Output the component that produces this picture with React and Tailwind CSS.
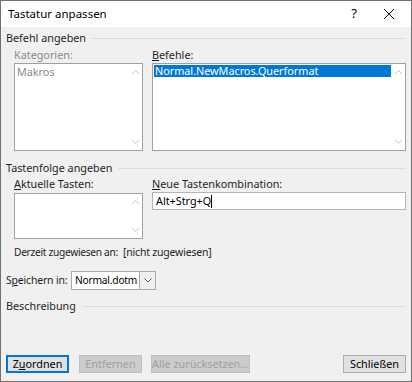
import React from "react";

const font = { fontFamily: '"Segoe UI", "Noto Sans", sans-serif' };

function ScrollArrows() {
  return (
    <div className="flex flex-col justify-between items-center w-[14px] py-[5px] text-[#c2c2c2]">
      <svg width="9" height="6" viewBox="0 0 9 6">
        <path d="M1 5 L4.5 1.5 L8 5" fill="none" stroke="currentColor" strokeWidth="1" />
      </svg>
      <svg width="9" height="6" viewBox="0 0 9 6">
        <path d="M1 1 L4.5 4.5 L8 1" fill="none" stroke="currentColor" strokeWidth="1" />
      </svg>
    </div>
  );
}

function GroupHeader({ children }) {
  return (
    <div className="flex items-center gap-[6px] h-[16px]">
      <span className="text-[#1e1e1e] whitespace-nowrap">{children}</span>
      <div className="flex-1 border-t border-[#dcdcdc] mt-[1px]" />
    </div>
  );
}

export default function App() {
  return (
    <div
      className="w-[412px] h-[382px] border border-[#707070] bg-[#f0f0f0] flex flex-col text-[10.8px] text-[#1e1e1e] overflow-hidden whitespace-nowrap"
      style={font}
    >
      {/* Title bar */}
      <div className="h-[26px] bg-white flex items-center pl-[7px] shrink-0">
        <span className="text-[11.5px] text-black">Tastatur anpassen</span>
        <span className="ml-auto mr-[26px] text-[13px] text-black">?</span>
        <svg width="12" height="12" viewBox="0 0 12 12" className="mr-[16px]">
          <path d="M1 1 L11 11 M11 1 L1 11" stroke="#111" strokeWidth="1" />
        </svg>
      </div>

      {/* Body */}
      <div className="flex-1 flex flex-col pl-[5px] pr-[5px] pt-[3px]">
        <GroupHeader>Befehl angeben</GroupHeader>

        <div className="flex gap-[9px] pl-[8px] mt-[2px]">
          <div className="w-[129px] flex flex-col">
            <span className="text-[#8a8a8a] leading-[14px]">Kategorien:</span>
            <div className="mt-[1px] h-[88px] border border-[#a0a0a0] bg-white flex">
              <div className="flex-1 pl-[2px] pt-[1px] text-[#8a8a8a] leading-[14px]">Makros</div>
              <ScrollArrows />
            </div>
          </div>
          <div className="flex-1 flex flex-col">
            <span className="leading-[14px]">
              <u>B</u>efehle:
            </span>
            <div className="mt-[1px] h-[88px] border border-[#a0a0a0] bg-white flex">
              <div className="flex-1 pl-[1px] pt-[1px]">
                <div className="bg-[#0078d7] text-white leading-[12px] h-[12px] pl-[1px]">
                  Normal.NewMacros.Querformat
                </div>
              </div>
              <ScrollArrows />
            </div>
          </div>
        </div>

        <div className="mt-[9px]">
          <GroupHeader>Tastenfolge angeben</GroupHeader>
        </div>

        <div className="flex gap-[9px] pl-[8px] mt-[1px]">
          <div className="w-[129px] flex flex-col">
            <span className="leading-[14px]">
              <u>A</u>ktuelle Tasten:
            </span>
            <div className="mt-[2px] h-[46px] border border-[#a0a0a0] bg-white flex">
              <div className="flex-1" />
              <ScrollArrows />
            </div>
          </div>
          <div className="flex-1 flex flex-col">
            <span className="leading-[14px]">
              <u>N</u>eue Tastenkombination:
            </span>
            <div className="mt-[1px] h-[18px] border border-[#b4b4b4] bg-white flex items-center pl-[3px]">
              <span className="text-black">Alt+Strg+Q</span>
              <span className="w-[1px] h-[13px] bg-black" />
            </div>
          </div>
        </div>

        <div className="flex pl-[8px] mt-[6px] h-[16px] items-center">
          <span className="w-[109px] text-[10.2px] tracking-[-0.3px]">Derzeit zugewiesen an:</span>
          <span className="text-[10.5px] tracking-[-0.2px]">[nicht zugewiesen]</span>
        </div>

        <div className="flex items-center mt-[10px] h-[19px]">
          <span className="w-[65px] text-[10.5px] tracking-[-0.2px]">
            S<u>p</u>eichern in:
          </span>
          <div className="h-[19px] w-[85px] border border-[#a8a8a8] bg-white flex">
            <span className="flex-1 pl-[3px] leading-[17px] text-black text-[10.2px] tracking-[-0.2px]">Normal.dotm</span>
            <div className="w-[16px] border-l border-[#a8a8a8] bg-[#f0f0f0] flex items-center justify-center">
              <svg width="8" height="5" viewBox="0 0 8 5">
                <path d="M0.5 0.5 L4 4 L7.5 0.5" fill="none" stroke="#555" strokeWidth="1" />
              </svg>
            </div>
          </div>
        </div>

        <div className="mt-[8px]">
          <GroupHeader>Beschreibung</GroupHeader>
        </div>

        <div className="flex-1" />

        <div className="flex items-center mb-[8px] h-[18px]">
          <button className="h-[18px] w-[63px] border-2 border-[#0078d7] bg-[#e1e1e1] text-black leading-none">
            Z<u>u</u>ordnen
          </button>
          <button className="ml-[10px] h-[18px] w-[63px] border border-[#bfbfbf] bg-[#cccccc] text-[#a0a0a0] leading-none">
            Entfernen
          </button>
          <button className="ml-[9px] h-[18px] w-[99px] border border-[#bfbfbf] bg-[#cccccc] text-[#a0a0a0] leading-none">
            Alle zurücksetzen...
          </button>
          <button className="ml-auto h-[18px] w-[63px] border border-[#adadad] bg-[#e1e1e1] text-black leading-none">
            Schließen
          </button>
        </div>
      </div>
    </div>
  );
}
